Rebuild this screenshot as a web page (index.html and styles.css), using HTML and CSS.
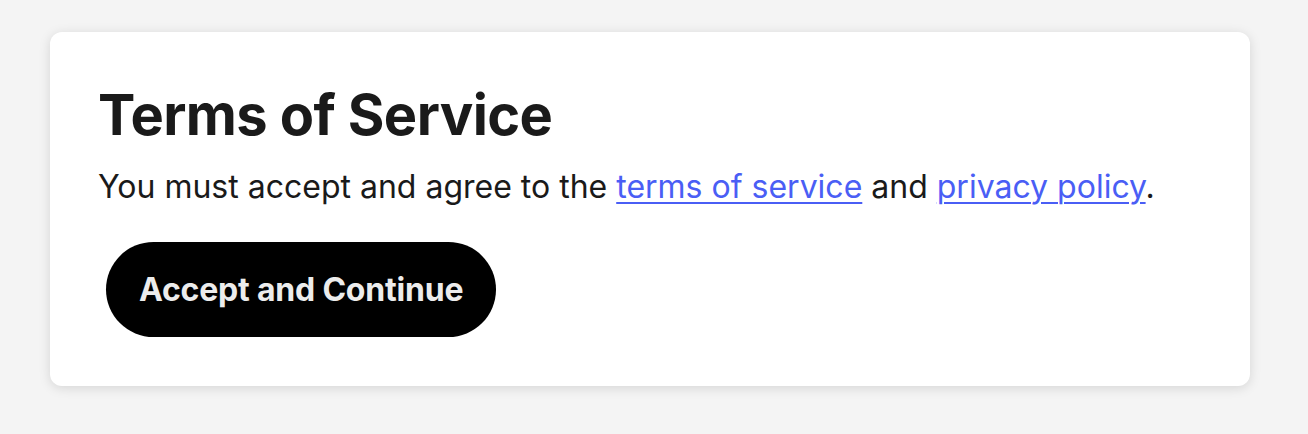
FILE: index.html
```html
<!DOCTYPE html>
<html lang="en">
<head>
<meta charset="utf-8">
<title>Terms of Service</title>
<link rel="stylesheet" href="styles.css">
</head>
<body>
<main class="page">
  <section class="card">
    <h1 class="title">Terms of Service</h1>
    <p class="text">You must accept and agree to the <a class="link" href="#">terms of service</a> and <a class="link" href="#">privacy policy</a>.</p>
    <button class="btn" type="button">Accept and Continue</button>
  </section>
</main>
</body>
</html>
```
FILE: styles.css
```css
html, body {
  margin: 0;
  padding: 0;
}
body {
  background: #f4f4f4;
  font-family: Inter, "Liberation Sans", sans-serif;
  color: #1a1a1a;
}
.page {
  padding: 32px 58px 48px 50px;
}
.card {
  background: #ffffff;
  border-radius: 12px;
  box-shadow: 0 2px 12px rgba(0, 0, 0, 0.13);
  padding: 51px 48px 49px 48px;
  display: flex;
  flex-direction: column;
  align-items: flex-start;
}
.title {
  margin: 0;
  font-size: 56px;
  font-weight: 700;
  line-height: 64px;
  letter-spacing: -0.6px;
  color: #1a1a1a;
}
.text {
  margin: 20px 0 0 0;
  font-size: 32px;
  line-height: 40px;
  color: #1a1a1a;
}
.link {
  color: #4a5ef5;
  text-decoration: underline;
  text-decoration-thickness: 2px;
  text-underline-offset: 4px;
}
.btn {
  margin: 35px 0 0 8px;
  height: 95px;
  padding: 0 33px;
  border: none;
  border-radius: 48px;
  background: #000000;
  color: #ececec;
  font-family: Inter, "Liberation Sans", sans-serif;
  font-size: 32px;
  font-weight: 700;
  letter-spacing: -0.2px;
}
```
